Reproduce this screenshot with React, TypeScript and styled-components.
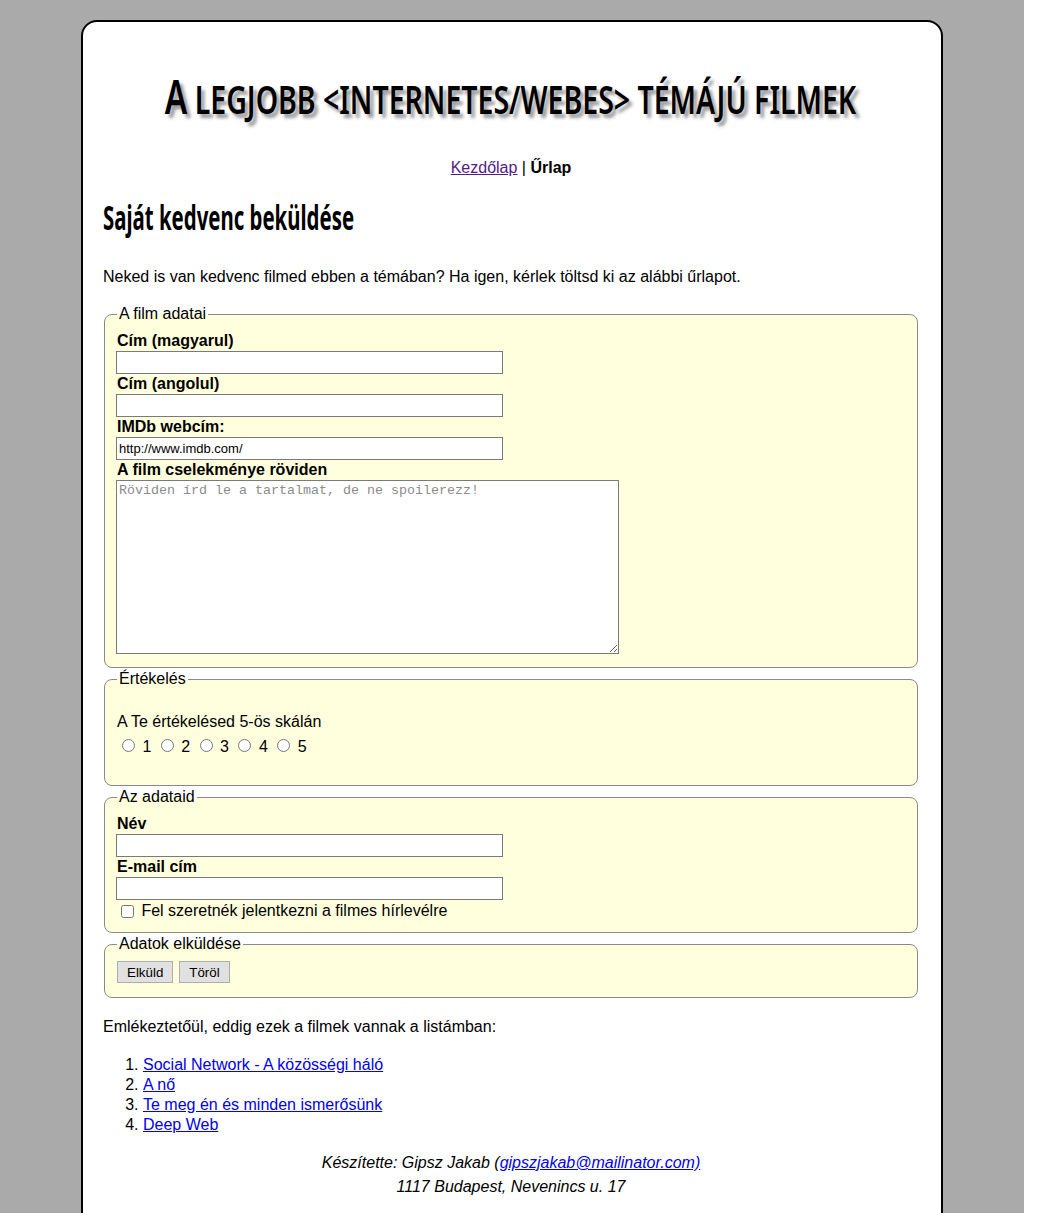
import React from "react";
import styled, { createGlobalStyle } from "styled-components";

const GlobalStyle = createGlobalStyle`
  html {
    margin: 0;
    padding: 0;
    background: #fff;
  }
  body {
    margin: 0;
    padding: 20px 0;
    width: 1024px;
    min-height: 100vh;
    box-sizing: border-box;
    background: #aaaaaa;
    font-family: "Liberation Sans", Arial, sans-serif;
    font-size: 16px;
    color: #000;
  }
`;

const headingFont = `"Noto Sans", "Liberation Sans", sans-serif`;

const Card = styled.div`
  box-sizing: border-box;
  width: 862px;
  margin: 0 auto;
  background: #fff;
  border: 2px solid #000;
  border-radius: 16px;
  padding: 44px 22px 20px 20px;
`;

const Title = styled.h1`
  margin: 0;
  display: flex;
  justify-content: center;
  font-family: ${headingFont};
  font-weight: 600;
  font-size: 40px;
  line-height: 60px;
  text-transform: uppercase;
  white-space: nowrap;
`;

const TitleText = styled.span`
  display: inline-block;
  transform: scaleX(0.712);
  transform-origin: 50% 50%;
  text-shadow: 5px 4px 4px #9a9a9a;
  &::first-letter {
    font-size: 47px;
  }
`;

const Nav = styled.nav`
  margin-top: 29px;
  text-align: center;
  line-height: 20px;
`;

const NavLink = styled.a`
  color: #551a8b;
  text-decoration: underline;
`;

const Current = styled.b`
  font-weight: bold;
`;

const SubTitle = styled.h2`
  margin: 19px 0 0;
  font-family: ${headingFont};
  font-weight: 700;
  font-size: 34px;
  line-height: 40px;
  white-space: nowrap;
`;

const SubTitleText = styled.span`
  display: inline-block;
  transform: scaleX(0.6);
  transform-origin: 0 50%;
`;

const Text = styled.p<{ $top?: number }>`
  margin: ${(p) => p.$top ?? 0}px 0 0;
  line-height: 20px;
`;

const Fieldset = styled.fieldset<{ $top?: number }>`
  margin: ${(p) => p.$top ?? 1}px 1px 0;
  padding: 8px 12px 10px;
  background: #ffffdd;
  border: 1px solid #8a8a8a;
  border-radius: 8px;
  min-width: 0;
`;

const Legend = styled.legend`
  padding: 0 2px;
  line-height: 18px;
  font-size: 16px;
`;

const Label = styled.label`
  display: block;
  font-weight: bold;
  line-height: 20px;
`;

const TextInput = styled.input`
  display: block;
  box-sizing: border-box;
  width: 387px;
  height: 23px;
  margin: 0 0 0 -1px;
  padding: 1px 2px;
  border: 1px solid #7a7a7a;
  background: #fff;
  font-family: "Liberation Sans", Arial, sans-serif;
  font-size: 13px;
  color: #000;
  outline: none;
`;

const TextArea = styled.textarea`
  display: block;
  box-sizing: border-box;
  width: 503px;
  height: 174px;
  margin: 0 0 3px -1px;
  padding: 2px;
  border: 1px solid #7a7a7a;
  background: #fff;
  font-family: "Liberation Mono", "Courier New", monospace;
  font-size: 13.33px;
  &::placeholder {
    color: #8c8c8c;
  }
`;

const RadioRow = styled.div`
  margin: 4px 0 18px;
  line-height: 20px;
`;

const Radio = styled.input`
  margin: 3px 3px 0 5px;
`;

const CheckRow = styled.div`
  line-height: 22px;
`;

const Check = styled.input`
  margin: 3px 3px 3px 4px;
  vertical-align: -2px;
`;

const ButtonRow = styled.div`
  display: flex;
  gap: 6px;
  margin-top: 0;
  margin-bottom: 4px;
`;

const Button = styled.button`
  box-sizing: border-box;
  height: 22px;
  padding: 0 9px;
  border: 1px solid #adadad;
  background: #e1e1e1;
  font-family: "Liberation Sans", Arial, sans-serif;
  font-size: 13.33px;
  color: #000;
`;

const MovieList = styled.ol`
  margin: 18px 0 0;
  padding-left: 40px;
  line-height: 20px;
`;

const MovieLink = styled.a`
  color: #0000ee;
  text-decoration: underline;
`;

const Footer = styled.footer`
  margin: 16px 0 16px;
  text-align: center;
  font-style: italic;
  line-height: 24px;
`;

const movies = [
  "Social Network - A közösségi háló",
  "A nő",
  "Te meg én és minden ismerősünk",
  "Deep Web",
];

export default function App() {
  return (
    <>
      <GlobalStyle />
      <Card>
        <Title>
          <TitleText>A legjobb &lt;internetes/webes&gt; témájú filmek</TitleText>
        </Title>
        <Nav>
          <NavLink href="#">Kezdőlap</NavLink> | <Current>Űrlap</Current>
        </Nav>
        <SubTitle>
          <SubTitleText>Saját kedvenc beküldése</SubTitleText>
        </SubTitle>
        <Text $top={30}>
          Neked is van kedvenc filmed ebben a témában? Ha igen, kérlek töltsd ki az alábbi űrlapot.
        </Text>
        <form onSubmit={(e) => e.preventDefault()}>
          <Fieldset $top={18}>
            <Legend>A film adatai</Legend>
            <Label>Cím (magyarul)</Label>
            <TextInput type="text" />
            <Label>Cím (angolul)</Label>
            <TextInput type="text" />
            <Label>IMDb webcím:</Label>
            <TextInput type="text" defaultValue="http://www.imdb.com/" />
            <Label>A film cselekménye röviden</Label>
            <TextArea placeholder="Röviden írd le a tartalmat, de ne spoilerezz!" />
          </Fieldset>
          <Fieldset $top={2}>
            <Legend>Értékelés</Legend>
            <Text $top={16}>A Te értékelésed 5-ös skálán</Text>
            <RadioRow>
              {[1, 2, 3, 4, 5].map((n) => (
                <React.Fragment key={n}>
                  <Radio type="radio" name="rating" value={n} /> {n}{" "}
                </React.Fragment>
              ))}
            </RadioRow>
          </Fieldset>
          <Fieldset $top={2}>
            <Legend>Az adataid</Legend>
            <Label>Név</Label>
            <TextInput type="text" />
            <Label>E-mail cím</Label>
            <TextInput type="email" />
            <CheckRow>
              <Check type="checkbox" /> Fel szeretnék jelentkezni a filmes hírlevélre
            </CheckRow>
          </Fieldset>
          <Fieldset $top={2}>
            <Legend>Adatok elküldése</Legend>
            <ButtonRow>
              <Button type="submit">Elküld</Button>
              <Button type="reset">Töröl</Button>
            </ButtonRow>
          </Fieldset>
        </form>
        <Text $top={19}>Emlékeztetőül, eddig ezek a filmek vannak a listámban:</Text>
        <MovieList>
          {movies.map((m) => (
            <li key={m}>
              <MovieLink href="#">{m}</MovieLink>
            </li>
          ))}
        </MovieList>
        <Footer>
          Készítette: Gipsz Jakab (<MovieLink href="#">gipszjakab@mailinator.com)</MovieLink>
          <br />
          1117 Budapest, Nevenincs u. 17
        </Footer>
      </Card>
    </>
  );
}
